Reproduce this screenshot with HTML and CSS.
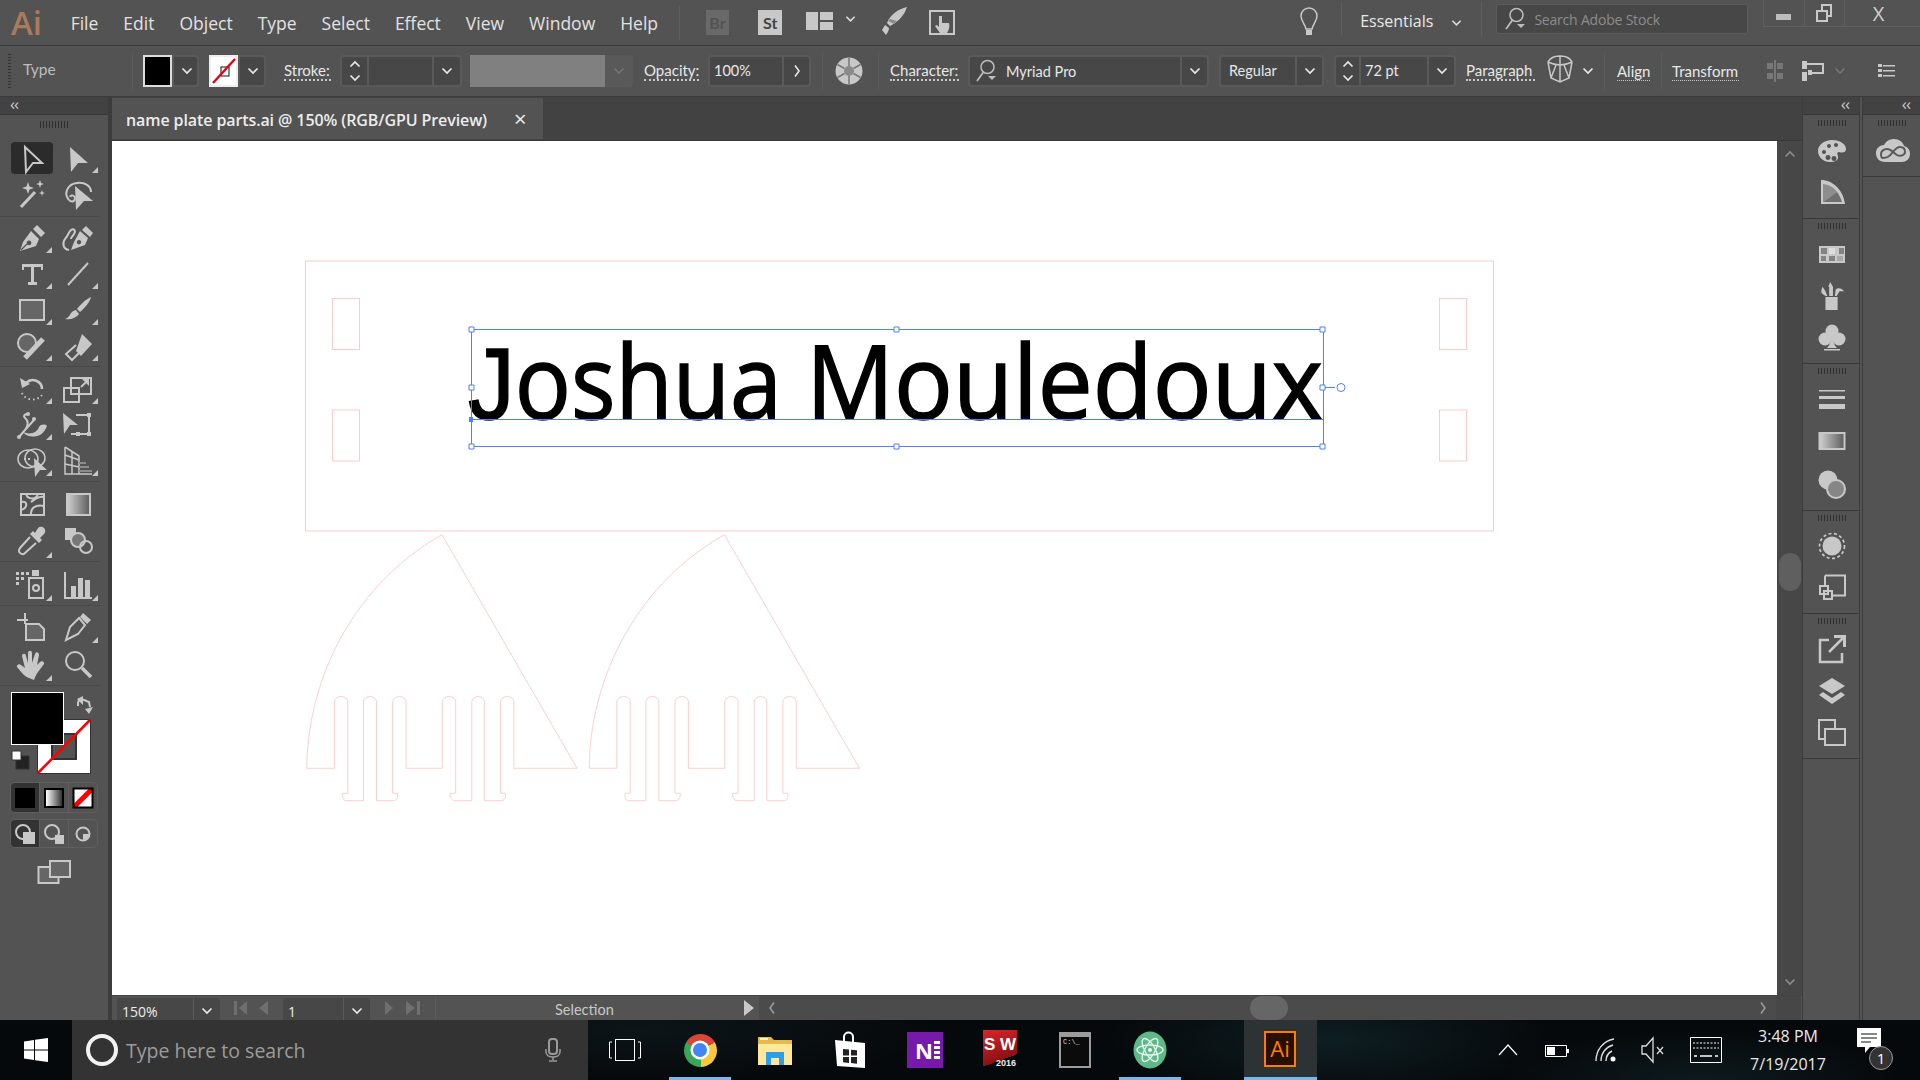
FILE: index.html
```html
<!DOCTYPE html>
<html lang="en">
<head>
<meta charset="utf-8">
<title>name plate parts.ai</title>
<link rel="stylesheet" href="styles.css">
</head>
<body>
<svg class="sprite" aria-hidden="true">
  <defs>
    <linearGradient id="gr"><stop offset="0" stop-color="#e8e8e8"/><stop offset="1" stop-color="#555"/></linearGradient>
    <linearGradient id="gr2"><stop offset="0" stop-color="#fff"/><stop offset="1" stop-color="#333"/></linearGradient>
    <linearGradient id="gr3"><stop offset="0" stop-color="#d0d0d0"/><stop offset="1" stop-color="#5c5c5c"/></linearGradient>
  </defs>
  <symbol id="cd" viewBox="0 0 12 8"><path d="M1.500 1.500 6 6l4.500-4.500" fill="none" stroke="currentColor" stroke-width="1.700"/></symbol>
  <symbol id="cu" viewBox="0 0 12 8"><path d="M1.500 6.500 6 2l4.500 4.500" fill="none" stroke="currentColor" stroke-width="1.700"/></symbol>
  <symbol id="cr" viewBox="0 0 8 14"><path d="M2 1.500 6 7l-4 5.500" fill="none" stroke="currentColor" stroke-width="1.600"/></symbol>
  <symbol id="cl" viewBox="0 0 8 14"><path d="M6 1.500 2 7l4 5.500" fill="none" stroke="currentColor" stroke-width="1.600"/></symbol>
  <symbol id="sr" viewBox="0 0 24 24"><circle cx="13.500" cy="8" r="6.500" fill="none" stroke="currentColor" stroke-width="1.500"/><path d="M9.500 13 3 22" fill="none" stroke="currentColor" stroke-width="1.800"/><path d="M14 17h8l-4 4z" fill="currentColor"/></symbol>
</svg>

<header class="menubar">
  <span class="logo">Ai</span>
  <nav class="menu">
    <span>File</span><span>Edit</span><span>Object</span><span>Type</span><span>Select</span><span>Effect</span><span>View</span><span>Window</span><span>Help</span>
  </nav>
  <span class="vsep vsep-menu"></span>
  <span class="app-br">Br</span>
  <span class="app-st">St</span>
  <svg class="ic-layout" width="27" height="18" viewBox="0 0 27 18"><path class="f" d="M0 0h12v18H0zM14 0h13v8H14zM14 10h13v8H14z"/></svg>
  <svg class="ch-layout"><use href="#cd"/></svg>
  <svg class="ic-feather" width="28" height="30" viewBox="0 0 28 30"><path class="f" d="M26 1C17 3 9 9 6 17l3 3C15 17 23 11 26 1ZM4 19l-3 5 4 5c2-3 3-5 3-7Z"/><path class="g" d="M9 13 7 15l6 3 3-3Z"/></svg>
  <svg class="ic-down" width="26" height="26" viewBox="0 0 26 26"><path class="s" d="M1 2h24v23H1z"/><path class="f" d="M10 7h3v7h7c1 3 0 7-2 10H11l-5-7 2-1 2 2Z"/></svg>
  <svg class="ic-bulb" width="20" height="30" viewBox="0 0 20 30"><path class="s s15" d="M10 2a8 8 0 0 1 8 8c0 5-4 8-5 13H7C6 18 2 15 2 10a8 8 0 0 1 8-8Z"/><path class="f" d="M7 24h6v5H7z"/></svg>
  <span class="vsep vsep-bulb"></span>
  <span class="essentials">Essentials</span>
  <svg class="ch-ess"><use href="#cd"/></svg>
  <span class="vsep vsep-ess"></span>
  <div class="stock"><svg class="sr"><use href="#sr"/></svg><span>Search Adobe Stock</span></div>
  <div class="winctl">
    <span class="wc wc-min"><i></i></span>
    <span class="wc wc-res"><svg width="18" height="20" viewBox="0 0 18 20"><path class="f" d="M6 1h11v13h-4v5H1V7h5Zm2 2v4h5v5h2V3ZM3 9v8h8V9Z"/></svg></span>
    <span class="wc wc-x">X</span>
  </div>
</header>

<section class="controlbar">
  <span class="cgrip"></span>
  <span class="c-type">Type</span>
  <div class="field c-fill"><span class="swatch swatch-k"></span><span class="fch"><svg class="ch"><use href="#cd"/></svg></span></div>
  <div class="field c-stroke"><span class="swatch swatch-none"><svg width="28" height="28" viewBox="0 0 28 28"><rect class="dk" x="10" y="10" width="8" height="9"/><path d="M2 26 24 2" stroke="#e60012" stroke-width="2.400"/></svg></span><span class="fch"><svg class="ch"><use href="#cd"/></svg></span></div>
  <span class="lbl c-strokel">Stroke:</span>
  <div class="field c-weight"><span class="step"><svg class="chu"><use href="#cu"/></svg><svg class="chu"><use href="#cd"/></svg></span><span class="grow"></span><span class="fch wide"><svg class="ch"><use href="#cd"/></svg></span></div>
  <div class="c-opgray"><span class="graybar"></span><svg class="ch dim"><use href="#cd"/></svg></div>
  <span class="lbl c-opl">Opacity:</span>
  <div class="field c-op"><span class="val grow">100%</span><span class="fch"><svg class="chr"><use href="#cr"/></svg></span></div>
  <span class="vline c-d1"></span>
  <svg class="c-globe" width="32" height="32" viewBox="0 0 32 32"><circle cx="16" cy="16" r="13.500" class="f"/><circle cx="16" cy="16" r="5" fill="#8a8a8a"/><path d="M16 3v8M16 21v8M4.500 9.500l7 4M20.500 18.500l7 4M27.500 9.500l-7 4M11.500 18.500l-7 4" stroke="#777" stroke-width="1.500"/></svg>
  <span class="vline c-d2"></span>
  <span class="lbl c-charl">Character:</span>
  <div class="field c-font"><svg class="sr"><use href="#sr"/></svg><span class="val grow">Myriad Pro</span><span class="fch wide2"><svg class="ch"><use href="#cd"/></svg></span></div>
  <div class="field c-style"><span class="val grow">Regular</span><span class="fch"><svg class="ch"><use href="#cd"/></svg></span></div>
  <div class="field c-size"><span class="step narrow"><svg class="chu"><use href="#cu"/></svg><svg class="chu"><use href="#cd"/></svg></span><span class="val grow">72 pt</span><span class="fch"><svg class="ch"><use href="#cd"/></svg></span></div>
  <span class="lbl c-para">Paragraph</span>
  <svg class="c-warp" width="28" height="30" viewBox="0 0 28 30"><path class="s s15" d="M14 2C8 2 4 4 2 8l3 16 9 4 9-4 3-16c-2-4-6-6-12-6ZM14 2v26M2 8c4 2 8 3 12 3s8-1 12-3M5 24l5-13M23 24l-5-13"/></svg>
  <svg class="c-warpch"><use href="#cd"/></svg>
  <span class="vline c-d3"></span>
  <span class="lbl thin c-align">Align</span>
  <span class="vline c-d4"></span>
  <span class="lbl thin c-trans">Transform</span>
  <svg class="c-ai1" width="20" height="22" viewBox="0 0 20 22"><path class="g2" d="M2 3h6v6H2zM12 3h6v6h-6zM2 13h6v6H2zM12 13h6v6h-6zM9 0h2v22H9z"/></svg>
  <svg class="c-ai2" width="23" height="20" viewBox="0 0 23 20"><path class="f" d="M0 0h5v8H0zM0 11h5v9H0z"/><path class="s" d="M5 3h16v9H8"/><path class="f" d="M6 9h4v5H6z"/></svg>
  <svg class="c-aich dim"><use href="#cd"/></svg>
  <svg class="c-list" width="17" height="14" viewBox="0 0 17 14"><path class="f" d="M0 0h4v3H0zM0 5h4v3H0zM0 10h4v3H0zM5 1h12v1.500H5zM5 6h12v1.500H5zM5 11h12v1.500H5z"/></svg>
</section>

<main class="workspace">
  <aside class="tools">
    <div class="dockhead"><span class="dbl">‹‹</span></div>
    <div class="griprow"><span class="grip"></span></div>

    <div class="tgroup g1">
      <div class="tool sel"><svg viewBox="0 0 32 32"><path class="s" d="M9 6 26 22H17l-7 9Z"/></svg></div>
      <div class="tool fly"><svg viewBox="0 0 32 32"><path class="f" d="M8 6 26 22H16l-7 9Z"/></svg></div>
      <div class="tool"><svg viewBox="0 0 32 32"><path class="f" d="M12 3l1.500 4.500L18 9l-4.500 1.500L12 15l-1.500-4.500L6 9l4.500-1.500ZM24 1l1 3 3 1-3 1-1 3-1-3-3-1 3-1ZM26 11l.8 2.200 2.200.8-2.200.8L26 17l-.8-2.200L23 14l2.200-.8Z"/><path class="s w3" d="M5 28 19 13"/></svg></div>
      <div class="tool"><svg viewBox="0 0 32 32"><path class="s" d="M7 21C1 14 6 5 15 4c8-1 14 3 14 9"/><path class="s" d="M7 21c3 3 6 1 6-2 0-2-4-4-5-1"/><path class="f" d="M13 7 31 22H22l-8 9Z"/></svg></div>
    </div>

    <div class="tgroup g2">
      <div class="tool fly"><svg viewBox="0 0 32 32"><path class="f" d="M21 3l8 8-4 4-8-8Z"/><path class="f ev" d="M15 9l8 8-3 7-16 5 3-9ZM13 18.500a2.400 2.400 0 1 0 .01 0Z"/><path d="M5 28l6-6" stroke="#535353" stroke-width="1.200"/></svg></div>
      <div class="tool"><svg viewBox="0 0 32 32"><path class="f" d="M24 4l7 7-3 4-8-7Z"/><path class="f ev" d="M18 9l8 7-3 7-14 5 3-8ZM17 18a2.200 2.200 0 1 0 .01 0Z"/><path class="s" d="M7 28C1 27 0 21 3 17c3-3 3-6 6-9 3-2 5 1 3 4-1 2-3 3-3 5"/></svg></div>
      <div class="tool fly"><svg viewBox="0 0 32 32"><path class="f" d="M6 6h21v6h-2V9h-7v15h3v3h-9v-3h3V9H8v3H6Z"/></svg></div>
      <div class="tool fly"><svg viewBox="0 0 32 32"><path class="s" d="M6 27 26 5"/></svg></div>
      <div class="tool fly"><svg viewBox="0 0 32 32"><rect class="sm" x="4" y="6" width="24" height="20"/></svg></div>
      <div class="tool fly"><svg viewBox="0 0 32 32"><path class="f" d="M29 3c-1 5-7 12-11 15l-3-3c3-4 9-10 14-12ZM14 16l3 4c-3 4-8 6-14 5 4-1 5-5 7-7 1-1 3-2 4-2Z"/></svg></div>
      <div class="tool fly"><svg viewBox="0 0 32 32"><circle class="sm" cx="11" cy="13" r="9"/><path class="s w5" d="M9 28 27 9"/></svg></div>
      <div class="tool fly"><svg viewBox="0 0 32 32"><path class="f" d="M20 4l10 10-11 12-5-5Z"/><path class="s" d="M14 15l-10 9 6 6 9-9"/></svg></div>
    </div>

    <div class="tgroup g3">
      <div class="tool fly"><svg viewBox="0 0 32 32"><path class="s w25" d="M10 10c6-6 16-2 16 6"/><path class="f" d="M4 5l2 10 8-4Z"/><path class="s dots" d="M6 20c2 6 14 10 20 2"/></svg></div>
      <div class="tool fly"><svg viewBox="0 0 32 32"><path class="s" d="M9 5h20v16H9zM2 15h15v14H2z"/><path class="s" d="M19 14l6-6"/><path class="f" d="M20 6h7v7Z"/></svg></div>
      <div class="tool fly"><svg viewBox="0 0 32 32"><path class="f" d="M7 23c7 3 14 1 16-5 2-3 6-3 8-1-2 5-5 9-10 10-5 1-10 1-14-4Z"/><path class="s" d="M3 28 9 21C13 16 12 11 9 9c-2-2 0-5 3-3M9 21l9-10"/><circle class="f" cx="12" cy="5" r="2"/><circle class="f" cx="18" cy="10" r="2"/><circle class="f" cx="3" cy="28" r="2"/></svg></div>
      <div class="tool"><svg viewBox="0 0 32 32"><path class="f" d="M1 4 16 16H8l-6 9Z"/><path class="s" d="M14 6h13v19H9"/><path class="f" d="M25 4h4v4h-4zM25 23h4v4h-4zM14 23h4v4h-4z"/></svg></div>
      <div class="tool fly"><svg viewBox="0 0 32 32"><ellipse class="s s15" cx="12" cy="14" rx="10" ry="9"/><ellipse class="s s15" cx="19" cy="13" rx="10" ry="9"/><path class="f" d="M18 13l13 12h-7l-5 7Z"/><path class="f" d="M8 13h2v2H8zM12 13h2v2h-2z"/></svg></div>
      <div class="tool fly"><svg viewBox="0 0 32 32"><path class="s s15" d="M3 2v27h27M3 2l14 9v18M3 10l14 5M3 19l14 3M10 6v23"/><path class="g" d="M17 17h7v2h-7zM17 21h10v2H17zM17 25h13v2H17z"/></svg></div>
    </div>

    <div class="tgroup g4">
      <div class="tool"><svg viewBox="0 0 32 32"><rect class="s" x="5" y="6" width="23" height="21"/><path class="s" d="M5 14c7-2 7 6 0 8M15 27c-1-7 5-11 13-9M10 6c2 6 10 6 12 0M15 14c3-2 7-6 13-5"/></svg></div>
      <div class="tool"><svg viewBox="0 0 32 32"><rect x="5" y="6" width="23" height="21" fill="url(#gr3)" stroke="#c8c8c8" stroke-width="2"/></svg></div>
      <div class="tool fly"><svg viewBox="0 0 32 32"><path class="f" d="M22 2a4 4 0 0 1 6 6l-4 4 2 2-3 3-9-9 3-3 2 2Z"/><path class="s" d="M14 11 4 22c-3 4 2 8 5 5l11-10"/></svg></div>
      <div class="tool"><svg viewBox="0 0 32 32"><path class="f" d="M3 2h11v12H3z"/><circle cx="16" cy="14" r="7" fill="#777" stroke="#c8c8c8" stroke-width="2"/><circle class="s" cx="24" cy="21" r="6"/></svg></div>
    </div>

    <div class="tgroup g5">
      <div class="tool fly"><svg viewBox="0 0 32 32"><path class="f" d="M0 3h3v3H0zM5 3h3v3H5zM10 3h3v3h-3zM0 8h3v3H0zM5 8h3v3H5zM0 13h3v3H0z"/><path class="f" d="M16 1h7v6h-7z"/><rect class="s" x="13" y="9" width="14" height="20"/><circle class="s" cx="20" cy="19" r="3"/></svg></div>
      <div class="tool fly"><svg viewBox="0 0 32 32"><path class="s" d="M3 3v26h27"/><path class="f" d="M9 17h5v11H9zM16 9h5v19h-5zM23 11h5v17h-5z"/></svg></div>
    </div>

    <div class="tgroup g6">
      <div class="tool"><svg viewBox="0 0 32 32"><path class="s" d="M1 9h11M9 2v11"/><path class="sm" d="M10 13h13l5 5v11H10Z"/></svg></div>
      <div class="tool fly"><svg viewBox="0 0 32 32"><path class="f" d="M21 2l8 7-4 4-7-7Z"/><path class="s" d="M17 7l6 7-7 9-12 6 4-13Z"/></svg></div>
      <div class="tool fly"><svg viewBox="0 0 32 32"><path class="f" d="M13 29C8 27 6 24 1 18c-1-2 2-4 4-2l4 3L6 7c0-3 4-3 4 0l2 7V4c0-3 4-3 4 0v10l3-9c1-3 4-2 4 1l-2 10 3-3c2-2 5 0 4 2l-6 8c-2 3-3 5-4 8Z"/></svg></div>
      <div class="tool"><svg viewBox="0 0 32 32"><circle class="s" cx="13" cy="12" r="9"/><path class="s w35" d="M20 19l9 9"/></svg></div>
    </div>

    <svg class="fillstroke" width="108" height="96" viewBox="0 0 108 96">
      <path fill="#fff" stroke="#333" d="M37.500 33.500h53v54h-53z"/>
      <path fill="#535353" stroke="#333" stroke-width="2" d="M52 48h24v25H52z"/>
      <path d="M38 87 90 34" stroke="#f00" stroke-width="2.500"/>
      <rect x="11.500" y="6.500" width="52" height="52" fill="#000" stroke="#fff"/>
      <path class="s" d="M78 20v-3c0-3 3-4 6-3l5 2 1 5"/>
      <path class="f" d="M77 13l6-3v9ZM85 23l8-2-4 7Z"/>
      <path fill="#222" stroke="#333" d="M16 70h13v13H16z"/>
      <path fill="#fff" stroke="#333" d="M12 65h9v9h-9z"/>
    </svg>

    <div class="seg mode-row">
      <span class="on"><i class="m-k"></i></span>
      <span><i class="m-g"></i></span>
      <span><svg width="20" height="20" viewBox="0 0 20 20"><path fill="#fff" d="M0 0h20v20H0z"/><path d="M1 19 19 1" stroke="#f00" stroke-width="5"/><path d="M.5.500h19v19H.500z" fill="none" stroke="#000" stroke-width="2"/></svg></span>
    </div>
    <div class="seg draw-row">
      <span class="on"><svg width="22" height="22" viewBox="0 0 22 22"><circle class="s" cx="9" cy="9" r="7"/><path class="f" d="M9 9h12v12H9z"/></svg></span>
      <span><svg width="22" height="22" viewBox="0 0 22 22"><circle class="s" cx="9" cy="9" r="7"/><path class="f" d="M12 12h9v9h-9z"/></svg></span>
      <span><svg width="16" height="16" viewBox="0 0 16 16"><circle class="s" cx="8" cy="8" r="6.500"/><path class="f" d="M8 8h6a6 6 0 0 1-6 6Z"/></svg></span>
    </div>
    <div class="screen"><svg width="34" height="26" viewBox="0 0 34 26"><rect class="sm" x="1.500" y="8" width="20" height="16"/><rect class="sm" x="13" y="2" width="20" height="16"/></svg></div>
  </aside>

  <div class="center">
    <div class="tabs">
      <div class="tab"><span>name plate parts.ai @ 150% (RGB/GPU Preview)</span><b>×</b></div>
    </div>
    <div class="stage">
      <svg class="art" viewBox="112 141 1665 854">
        <defs>
          <path id="part" d="M441.900 534.700 577 768.300H513.900V702a6.700 5.500 0 0 0-13.400 0V793.300H505.500c0 4 0 7.400-5 7.400H484.400V702a6.300 5.500 0 0 0-12.600 0V800.700H454.600c-3 0-4.600-4-4.600-7.400H455.700V702a6.700 5.500 0 0 0-13.400 0V768.300H406V702a6.700 5.500 0 0 0-13.400 0V793.300H397.900c0 4-1 7.400-5 7.400H376.500V702a6.500 5.500 0 0 0-13 0V800.700H345.500c-2 0-3-4-3-7.400H347.800V702a6.700 5.500 0 0 0-13.400 0V768.300H306.800C307 690 345 590 441.900 534.700Z"/>
        </defs>
        <rect class="a1" x="305.500" y="261" width="1188" height="270"/>
        <rect class="a1" x="332.500" y="298.500" width="27" height="51"/>
        <rect class="a1" x="332.500" y="410" width="27" height="51"/>
        <rect class="a1" x="1439.500" y="298.500" width="27" height="51"/>
        <rect class="a1" x="1439.500" y="410" width="27" height="51"/>
        <use href="#part" class="a2"/>
        <use href="#part" class="a2" x="282.400"/>
        <text class="name" x="468" y="419" textLength="314" lengthAdjust="spacingAndGlyphs"><tspan class="name-j">J</tspan>oshua</text>
        <text class="name" x="806" y="419" textLength="517" lengthAdjust="spacingAndGlyphs">Mouledoux</text>
        <path class="sl" d="M471.500 329.500h852v117h-852zM471 419.500h852M1323 387.500h12"/>
        <circle class="sl" cx="1341" cy="387.500" r="4"/>
        <path class="h" d="M469 327h5v5h-5zM894 327h5v5h-5zM1320 327h5v5h-5zM469 385h5v5h-5zM1320 385h5v5h-5zM469 444h5v5h-5zM894 444h5v5h-5zM1320 444h5v5h-5z"/>
        <path d="M469 417h4v5h-4z" fill="#4f7fff"/>
      </svg>
      <div class="vscroll">
        <svg class="vs-up"><use href="#cu"/></svg>
        <span class="vs-thumb"></span>
        <svg class="vs-down"><use href="#cd"/></svg>
      </div>
    </div>
    <div class="status">
      <div class="st-left">
        <div class="sfield sf-zoom"><span class="sval">150%</span><span class="sch"><svg class="ch"><use href="#cd"/></svg></span></div>
        <svg class="nav" width="46" height="16" viewBox="0 0 46 16"><path class="nv" d="M0 1h3v14H0zM13 1v14L5 8ZM34 1v14l-9-7Z"/></svg>
        <div class="sfield sf-page"><span class="sval">1</span><span class="sch"><svg class="ch"><use href="#cd"/></svg></span></div>
        <svg class="nav nav2" width="44" height="16" viewBox="0 0 44 16"><path class="nv" d="M0 1v14l8-7ZM21 1v14l9-7ZM32 1h3v14h-3z"/></svg>
        <span class="st-div"></span>
        <span class="st-label">Selection</span>
        <svg class="st-play" width="10" height="16" viewBox="0 0 10 16"><path class="f" d="M0 0v16l10-8Z"/></svg>
      </div>
      <div class="hscroll">
        <svg class="hs-l"><use href="#cl"/></svg>
        <span class="hs-thumb"></span>
        <svg class="hs-r"><use href="#cr"/></svg>
      </div>
      <div class="corner"></div>
    </div>
  </div>

  <aside class="dock">
    <div class="dockcol">
      <div class="dockhead right"><span class="dbl">‹‹</span></div>
      <div class="pgroup first">
        <span class="grip"></span>
        <div class="pi"><svg viewBox="0 0 30 26"><path class="f ev" d="M15 2c8 0 14 4 14 9 0 4-4 4-7 3-2 0-2 2-1 4 1 4-3 6-8 6C6 24 1 19 1 13 1 7 7 2 15 2ZM7 12a2 2 0 1 0 .01 0ZM11 17a2.500 2.500 0 1 0 .01 0ZM17 18a2.500 2.500 0 1 0 .01 0ZM12 6a2 2 0 1 0 .01 0ZM19 5a2 2 0 1 0 .01 0Z"/></svg></div>
        <div class="pi"><svg viewBox="0 0 30 26"><path class="f" d="M4 0c12 0 22 10 24 24H4Z"/><path fill="#8d8d8d" d="M6 22 6 4c8 1 12 5 14 8Z"/><path fill="#6f6f6f" d="M6 22l14-10c2 3 4 6 5 10Z"/></svg></div>
      </div>
      <div class="pgroup">
        <span class="grip"></span>
        <div class="pi"><svg viewBox="0 0 30 26"><path class="f" d="M2 5h26v17H2z"/><path fill="#838383" d="M4 7h6v6H4zM22 7h5v6h-5zM4 15h5v5H4zM12 15h6v5h-6z"/><path fill="#ddd" d="M12 7h6v6h-6z"/><path fill="#a8a8a8" d="M20 15h6v5h-6z"/></svg></div>
        <div class="pi"><svg viewBox="0 0 30 32"><path class="f" d="M8 17h13v14H8zM12 16V6h-1l2-5 3 5v10h-1zM8 16 4 13c-1-2 0-5 1-7l3 5 2 5ZM18 16l1-7c2-2 6-2 9 2h-5l-3 5Z"/></svg></div>
        <div class="pi"><svg viewBox="0 0 30 30"><circle class="f" cx="15" cy="8" r="6.500"/><circle class="f" cx="8" cy="16" r="6.500"/><circle class="f" cx="22" cy="16" r="6.500"/><path class="f" d="M14 12h2c0 6 1 10 4 13H10c3-3 4-7 4-13ZM7 26h16v1.500H7z"/></svg></div>
      </div>
      <div class="pgroup">
        <span class="grip"></span>
        <div class="pi"><svg viewBox="0 0 30 26"><path class="f" d="M2 4h26v1.500H2zM2 10h26v3H2zM2 18h26v5H2z"/></svg></div>
        <div class="pi"><svg viewBox="0 0 30 26"><rect x="2.500" y="5" width="25" height="16" fill="url(#gr3)" stroke="#c8c8c8" stroke-width="2"/></svg></div>
        <div class="pi pi-low"><svg viewBox="0 0 30 30"><circle class="f" cx="11" cy="10" r="9.500"/><circle cx="19" cy="19" r="9" fill="#868686" stroke="#c8c8c8" stroke-width="2"/></svg></div>
      </div>
      <div class="pgroup">
        <span class="grip"></span>
        <div class="pi"><svg viewBox="0 0 30 30"><circle class="f" cx="15" cy="15" r="9.500"/><circle class="s dash" cx="15" cy="15" r="12.500"/></svg></div>
        <div class="pi"><svg viewBox="0 0 30 28"><path class="s" d="M8 1.500h20v20H15M8 1.500v11"/><path class="s" d="M3 12h8v8H3zM7 17h8v8H7z"/></svg></div>
      </div>
      <div class="pgroup">
        <span class="grip"></span>
        <div class="pi"><svg viewBox="0 0 30 30"><path class="s w25" d="M12 6H3v22h22v-9"/><path class="s w25" d="M12 18 26 4"/><path class="f" d="M17 1h12v12h-3V4h-9Z"/></svg></div>
        <div class="pi"><svg viewBox="0 0 30 30"><path class="f" d="M15 2l13 8-13 8L2 10ZM2 19l4-3 9 6 9-6 4 3-13 9Z"/></svg></div>
        <div class="pi"><svg viewBox="0 0 30 30"><path class="s" d="M2 2h16v19H2z"/><rect x="8" y="11" width="20" height="16" fill="#535353" stroke="#c8c8c8" stroke-width="2"/></svg></div>
      </div>
    </div>
    <div class="dockcol cc">
      <div class="dockhead right"><span class="dbl">‹‹</span></div>
      <div class="pgroup first cc-g">
        <span class="grip"></span>
        <div class="pi"><svg viewBox="0 0 34 26"><path class="f" d="M9 24C3 24 0 20 0 15c0-5 4-8 8-8 2-4 6-6 10-6 5 0 9 3 10 7 4 1 6 4 6 8 0 5-4 8-8 8Z"/><path d="M5 16c0-3 3-5 6-5 4 0 7 4 10 6 3 2 8 0 8-3s-2-5-5-5c-4 0-6 4-8 6-2 3-5 5-9 5-1 0-2 0-2-4Z" fill="none" stroke="#5a5a5a" stroke-width="2"/></svg></div>
      </div>
    </div>
  </aside>
</main>

<footer class="taskbar">
  <div class="tb-start"><svg width="24" height="24" viewBox="0 0 24 24"><path fill="#fff" d="M0 3.400 10 2v9.500H0ZM11 1.800 24 0v11.500H11ZM0 12.500h10V22L0 20.600ZM11 12.500h13V24l-13-1.800Z"/></svg></div>
  <div class="tb-search">
    <span class="cortana"></span>
    <span class="tb-hint">Type here to search</span>
    <svg class="mic" width="16" height="24" viewBox="0 0 16 24"><rect x="4" y="1" width="8" height="15" rx="3" fill="none" stroke="#9a9a9a" stroke-width="2"/><path d="M1 11v3c0 3 3 5 7 5s7-2 7-5v-3M8 19v3M4 23h8" fill="none" stroke="#9a9a9a" stroke-width="1.500"/></svg>
  </div>
  <div class="tb-taskview"><svg width="32" height="22" viewBox="0 0 32 22"><rect x="6.500" y=".500" width="19" height="21" fill="none" stroke="#fff"/><path d="M3 3H.500v16H3M29 3h2.500v16H29" fill="none" stroke="#fff"/></svg></div>
  <div class="tb-app run"><span class="chrome"></span></div>
  <div class="tb-app"><svg width="34" height="30" viewBox="0 0 34 30"><path fill="#e5b94c" d="M0 2h13l3 3h18v25H0Z"/><path fill="#ffe79b" d="M0 9h34v21H0Z"/><path fill="#2f9ee8" d="M8 17h18v13h-5v-7h-8v7H8Z"/><path fill="#fff3c9" d="M2 3h8v2H2Z"/></svg></div>
  <div class="tb-app"><svg width="32" height="38" viewBox="0 0 32 38"><path fill="none" stroke="#fff" stroke-width="2" d="M10 11V6c0-6 9-6 9 0v5"/><path fill="#fff" d="M1 9l30 3v25L3 35Z"/><path fill="#222" d="M9 18l6 .5v6H9ZM17 18.700l6 .5v5.300h-6ZM9 26h6v6l-6-.7ZM17 26h6v6.800l-6-.7Z"/></svg></div>
  <div class="tb-app"><span class="onenote">N<i></i></span></div>
  <div class="tb-app"><span class="sw"><b>S W</b><em>2016</em></span></div>
  <div class="tb-app"><span class="cmd">C:\_</span></div>
  <div class="tb-app run"><svg width="34" height="38" viewBox="0 0 34 38"><ellipse cx="17" cy="19" rx="16.500" ry="18.500" fill="#5db98a"/><g fill="none" stroke="#e8f7ee" stroke-width="1.400"><ellipse cx="17" cy="19" rx="13" ry="5"/><ellipse cx="17" cy="19" rx="13" ry="5" transform="rotate(60 17 19)"/><ellipse cx="17" cy="19" rx="13" ry="5" transform="rotate(120 17 19)"/></g><circle cx="17" cy="19" r="2" fill="#e8f7ee"/></svg></div>
  <div class="tb-ai"><span class="ai-ico">Ai</span></div>
  <div class="tray">
    <span class="tr t1"><svg width="20" height="12" viewBox="0 0 20 12"><path d="M1 11 10 1l9 10" fill="none" stroke="#fff" stroke-width="1.200"/></svg></span>
    <span class="tr t2"><svg width="24" height="14" viewBox="0 0 24 14"><path d="M.500 2.500h21v11H.500z" fill="none" stroke="#fff"/><path d="M2 4h8v8H2zM22 6h2v4h-2z" fill="#fff"/></svg></span>
    <span class="tr t3"><svg width="22" height="24" viewBox="0 0 22 24"><path d="M2 23C2 12 9 3 20 1M7 23C7 15 12 9 19 7M12 23c0-4 2-8 6-10" fill="none" stroke="#ddd" stroke-width="1.400"/><circle cx="19" cy="21" r="2.500" fill="#fff"/></svg></span>
    <span class="tr t4"><svg width="24" height="26" viewBox="0 0 24 26"><path d="M1 9h4l7-8v24l-7-8H1Z" fill="none" stroke="#ddd" stroke-width="1.300"/><path d="M16 10l6 7M22 10l-6 7" stroke="#ddd" stroke-width="1.200"/></svg></span>
    <span class="tr t5"><svg width="32" height="26" viewBox="0 0 32 26"><path d="M.500.500h31v25H.500z" fill="none" stroke="#fff"/><path d="M3 6h26M3 11h26" stroke="#fff" stroke-dasharray="2 1.500"/><path d="M4 19h3M10 19h12M25 19h3" stroke="#fff" stroke-width="1.300"/></svg></span>
    <div class="clock"><span>3:48 PM</span><span>7/19/2017</span></div>
    <span class="notif"><svg width="24" height="28" viewBox="0 0 24 28"><path fill="#fff" d="M0 0h24v19H13l-5 6v-6H0Z"/><path stroke="#111" d="M4 6h16M4 10h16M4 14h10"/></svg><b>1</b></span>
  </div>
</footer>
</body>
</html>
```

FILE: styles.css
```css
* { box-sizing: border-box; }
html, body { margin: 0; padding: 0; }
body {
  width: 1920px; height: 1080px; overflow: hidden;
  display: flex; flex-direction: column;
  background: #535353; color: #e6e6e6;
  font-family: "Open Sans", "Noto Sans", sans-serif;
}
svg { display: block; flex: none; overflow: visible; }
.sprite { position: absolute; width: 0; height: 0; }

/* shared icon paints */
.f { fill: #c8c8c8; }
.g { fill: #8c8c8c; }
.g2 { fill: #777; }
.s { fill: none; stroke: #c8c8c8; stroke-width: 2; }
.s15 { stroke-width: 1.500; }
.w25 { stroke-width: 2.500; }
.w3 { stroke-width: 3; }
.w35 { stroke-width: 3.500; }
.w5 { stroke-width: 5; }
.sm { fill: #666; stroke: #c8c8c8; stroke-width: 2; }
.ev { fill-rule: evenodd; }
.dots { stroke-dasharray: 1.500 3; }
.dash { stroke-dasharray: 3 2.500; stroke-width: 1.700; }

/* menu bar */
.menubar {
  height: 46px; flex: none; display: flex; align-items: center;
  background: #535353; border-bottom: 1px solid #3b3b3b;
}
.logo { margin-left: 11px; width: 36px; font: 600 33px/45px "Open Sans", sans-serif; color: #a97a5c; }
.menu { display: flex; gap: 25px; margin-left: 24px; width: 586px; font-size: 17.500px; color: #e2e2e2; white-space: nowrap; }
.vsep { width: 1px; height: 34px; background: #5f5f5f; }
.vsep-menu { margin-left: 22px; }
.app-br, .app-st {
  width: 24px; height: 25px; text-align: center;
  font: 700 16px/25px "Lato", sans-serif;
}
.app-br { margin-left: 26px; background: #696969; color: #535353; }
.app-st { margin-left: 29px; background: #c8c8c8; color: #444; }
.ic-layout { margin-left: 24px; margin-top: -4px; }
.ch-layout { width: 11px; height: 8px; margin-left: 12px; margin-top: -8px; color: #ddd; }
.ic-feather { margin-left: 25px; margin-top: -4px; }
.ic-down { margin-left: 20px; margin-top: -2px; }
.ic-bulb { margin-left: 344px; margin-top: -4px; }
.vsep-bulb { margin-left: 22px; margin-top: -8px; }
.essentials { margin-left: 18px; width: 78px; margin-top: -4px; font-size: 16px; color: #e8e8e8; }
.ch-ess { width: 11px; height: 8px; margin-left: 14px; color: #ddd; }
.vsep-ess { margin-left: 19px; margin-top: -8px; }
.stock {
  margin-left: 14px; width: 254px; height: 30px; margin-top: -7px;
  display: flex; align-items: center; padding-left: 6px;
  background: #474747; border: 1px solid #5c5c5c; border-radius: 3px;
  font-size: 14px; color: #8c8c8c;
}
.sr { width: 24px; height: 24px; color: #bdbdbd; }
.stock span { margin-left: 7px; letter-spacing: -.2px; }
.winctl {
  margin-left: 15px; width: 157px; height: 27px; align-self: flex-start;
  display: flex; border-bottom: 1px solid #606060;
}
.wc { display: flex; align-items: center; justify-content: center; border-left: 1px solid #5f5f5f; }
.wc-min { width: 41px; padding-top: 8px; }
.wc-min i { width: 15px; height: 6px; background: #bdbdbd; }
.wc-res { width: 40px; }
.wc-x { width: 76px; padding-right: 8px; font-size: 20px; color: #d0d0d0; }

/* control bar */
.controlbar {
  height: 51px; flex: none; display: flex; align-items: center;
  background: #535353; border-bottom: 1px solid #3b3b3b;
  font: 15px "Lato", sans-serif; color: #e8e8e8;
}
.cgrip {
  margin-left: 8px; width: 3px; height: 34px;
  background: repeating-linear-gradient(#333 0 1px, transparent 1px 3px);
}
.c-type { margin-left: 12px; width: 110px; height: 36px; line-height: 32px; color: #bdbdbd; border-right: 1px solid #5c5c5c; font-size: 15.500px; }
.field {
  height: 32px; display: flex; align-items: stretch;
  background: #474747; border: 2px solid #5a5a5a; border-radius: 4px;
}
.fch {
  width: 27px; flex: none; display: flex; align-items: center; justify-content: center;
  border-left: 2px solid #5a5a5a;
}
.fch.wide { width: 28px; }
.ch { width: 12px; height: 8px; color: #e8e8e8; }
.dim { color: #747474; }
.chu { width: 12px; height: 8px; color: #e8e8e8; }
.chr { width: 8px; height: 14px; color: #e8e8e8; }
.swatch { width: 29px; flex: none; display: block; margin: -2px 0 -2px -2px; border: 2px solid #ddd; }
.swatch-k { background: #000; }
.swatch-none { background: #fff; border-color: #eee; }
.dk { fill: none; stroke: #111; stroke-width: 1; }
.c-fill { margin-left: 10px; width: 56px; }
.c-stroke { margin-left: 10px; width: 57px; }
.lbl { flex: none; border-bottom: 2px dotted #c8c8c8; line-height: 18px; }
.lbl.thin { border-bottom-width: 1px; }
.c-strokel { margin-left: 18px; width: 47px; }
.c-weight { margin-left: 9px; width: 122px; }
.step {
  width: 27px; flex: none; display: flex; flex-direction: column;
  align-items: center; justify-content: center; gap: 6px;
  border-right: 2px solid #5a5a5a;
}
.step.narrow { width: 25px; }
.grow { flex: 1; }
.c-opgray { margin-left: 8px; width: 163px; height: 32px; display: flex; align-items: center; background: #595959; border-radius: 3px; }
.graybar { width: 135px; height: 32px; background: #808080; }
.c-opgray .ch { margin-left: 8px; }
.c-opl { margin-left: 11px; width: 55px; }
.c-op { margin-left: 9px; width: 103px; }
.val { padding-left: 4px; line-height: 27px; font-size: 14.500px; color: #e8e8e8; }
.vline { width: 1px; height: 36px; flex: none; background: #5c5c5c; }
.c-d1 { margin-left: 11px; }
.c-globe { margin-left: 10px; }
.c-d2 { margin-left: 13px; }
.c-charl { margin-left: 11px; width: 69px; }
.c-font { margin-left: 9px; width: 241px; padding-left: 4px; align-items: center; }
.c-font .val { padding-left: 8px; }
.c-font .fch { align-self: stretch; }
.c-style { margin-left: 10px; width: 105px; }
.c-style .val { padding-left: 8px; }
.c-size { margin-left: 10px; width: 122px; }
.c-para { margin-left: 10px; width: 69px; }
.c-warp { margin-left: 11px; margin-top: -4px; }
.c-warpch { margin-left: 8px; width: 12px; height: 8px; color: #e8e8e8; }
.c-d3 { margin-left: 10px; }
.c-align { margin-left: 12px; width: 33px; }
.c-d4 { margin-left: 11px; }
.c-trans { margin-left: 10px; width: 67px; }
.c-ai1 { margin-left: 26px; }
.c-ai2 { margin-left: 17px; }
.c-aich { margin-left: 9px; width: 12px; height: 8px; }
.c-list { margin-left: 32px; }

/* workspace */
.workspace { flex: none; height: 923px; display: flex; }
.tools { width: 112px; flex: none; background: #535353; border-right: 4px solid #3c3c3c; position: relative; }
.dockhead {
  height: 18px; background: #424242; display: flex; align-items: center; padding-left: 10px;
  border-bottom: 1px solid #383838;
}
.dockhead.right { justify-content: flex-end; padding: 0 10px 0 0; height: 18px; }
.dbl { font-size: 17px; line-height: 14px; color: #c8c8c8; letter-spacing: -1px; margin-top: -3px; }
.griprow { height: 18px; display: flex; align-items: center; justify-content: center; }
.grip {
  display: block; width: 29px; height: 7px;
  background: repeating-linear-gradient(90deg, #2f2f2f 0 1px, transparent 1px 3px);
}
.tgroup {
  display: grid; grid-template-columns: 46px 46px; padding-left: 9px; margin-right: 8px;
  border-bottom: 1px solid #484848;
}
.g1 { grid-auto-rows: 38px; padding-top: 5px; padding-bottom: 2px; }
.g2 { grid-auto-rows: 36px; padding-top: 3px; padding-bottom: 2px; }
.g3 { grid-auto-rows: 36px; padding-top: 4px; padding-bottom: 2px; }
.g4 { grid-auto-rows: 38px; padding-top: 3px; }
.g5 { grid-auto-rows: 38px; padding-top: 4px; padding-bottom: 1px; }
.g6 { grid-auto-rows: 38px; padding-top: 2px; padding-bottom: 1px; }
.tool { position: relative; display: flex; align-items: center; justify-content: center; }
.tool svg { width: 32px; height: 32px; }
.tool.sel::before {
  content: ""; position: absolute; left: 2px; right: 2px; top: 4px; bottom: 2px;
  background: #2b2b2b; border-radius: 4px;
}
.tool.sel svg { position: relative; }
.fly::after {
  content: ""; position: absolute; right: 3px; bottom: 3px; width: 0; height: 0;
  border-style: solid; border-width: 0 0 6px 6px; border-color: transparent transparent #c8c8c8 transparent;
}
.fillstroke { height: 96px; }
.seg {
  margin: 0 0 0 10px; width: 88px; display: flex;
  border: 1px solid #5f5f5f; border-radius: 5px; overflow: hidden; background: #535353;
}
.seg span {
  flex: 1; display: flex; align-items: center; justify-content: center;
  border-left: 1px solid #5f5f5f;
}
.seg span.on { background: #333; border-left: 0; }
.mode-row { height: 31px; }
.draw-row { height: 29px; margin-top: 6px; }
.m-k { width: 20px; height: 20px; background: #000; }
.m-g { width: 20px; height: 20px; background: linear-gradient(90deg, #fff, #333); border: 2px solid #000; }
.screen { margin-top: 11px; display: flex; justify-content: center; }

.center { width: 1690px; flex: none; display: flex; flex-direction: column; }
.tabs { height: 44px; flex: none; background: #424242; border-bottom: 1px solid #383838; display: flex; align-items: flex-start; padding-top: 1px; }
.tab {
  width: 431px; height: 41px; display: flex; align-items: center; padding-left: 14px; padding-top: 2px;
  background: #535353; font-weight: 600; font-size: 16px; color: #ececec; letter-spacing: -.1px; white-space: nowrap;
}
.tab span { width: 388px; }
.tab b { font-size: 22px; font-weight: 400; margin-top: -4px; }
.stage { height: 854px; flex: none; display: flex; }
.art { width: 1665px; height: 854px; background: #fff; }
.a1 { fill: none; stroke: #ffcaca; stroke-width: 1; }
.a2 { fill: none; stroke: #ffc8c8; stroke-width: .9; }
.name { font: 400 102px "Open Sans", sans-serif; fill: #000; stroke: #000; stroke-width: 1.500px; }
.name-j { font-family: "Liberation Sans", sans-serif; }
.sl { fill: none; stroke: #4f7fff; stroke-width: 1; }
.h { fill: #fff; stroke: #4f7fff; stroke-width: 1; }

.vscroll {
  width: 25px; flex: none; background: #474747; position: relative;
  display: flex; flex-direction: column; align-items: center;
}
.vs-up { width: 12px; height: 8px; margin-top: 9px; color: #8c8c8c; }
.vs-thumb { width: 22px; height: 38px; margin-top: 395px; border-radius: 11px; background: #5f5f5f; }
.vs-down { width: 12px; height: 8px; margin-top: auto; margin-bottom: 9px; color: #8c8c8c; }

.status { flex: 1; display: flex; background: #535353; overflow: hidden; border-top: 1px solid #444; }
.st-left { width: 647px; flex: none; display: flex; align-items: center; padding-left: 5px; }
.sfield {
  height: 26px; margin-top: 6px; display: flex;
  background: #474747; border-top-left-radius: 3px; border-top-right-radius: 3px;
  font-size: 14px;
}
.sf-zoom { width: 103px; }
.sf-page { width: 87px; }
.sval { flex: 1; padding-left: 5px; line-height: 27px; color: #ececec; }
.sch { width: 27px; display: flex; align-items: center; justify-content: center; border-left: 1px solid #5a5a5a; }
.nav { margin-left: 14px; margin-right: 3px; }
.nav2 { margin-left: 15px; }
.nv { fill: #6f6f6f; }
.st-div { width: 1px; height: 24px; background: #5c5c5c; margin-left: 3px; }
.st-label { margin-left: 119px; width: 189px; margin-top: 3px; font: 14.500px "Lato", sans-serif; color: #c8c8c8; }
.st-play { margin-left: 0; }
.hscroll { width: 1017px; flex: none; background: #4b4b4b; display: flex; align-items: center; position: relative; }
.hs-l { width: 8px; height: 14px; margin-left: 9px; color: #999; }
.hs-thumb { width: 38px; height: 24px; margin-left: 474px; background: #666; border-radius: 12px; }
.hs-r { width: 8px; height: 14px; margin-left: 471px; color: #999; }
.corner { width: 25px; flex: none; background: #474747; }

.dock { flex: 1; display: flex; background: #535353; gap: 2px; }
.dockcol { width: 58px; flex: none; border-left: 1px solid #3c3c3c; border-right: 1px solid #3c3c3c; }
.dockcol.cc { flex: 1; border-right: 0; }
.pgroup {
  display: flex; flex-direction: column; align-items: center;
  padding-left: 2px; padding-bottom: 4px; border-bottom: 1px solid #383838;
}
.pgroup.first { margin-top: 1px; }
.pgroup .grip { height: 14px; background-clip: content-box; padding: 4px 0; flex: none; }
.pi { height: 42px; width: 100%; display: flex; align-items: center; justify-content: center; }
.pi svg { width: 30px; height: 30px; }
.pi-low { padding-top: 2px; height: 44px; }
.cc-g { padding-bottom: 0; height: 61px; }
.cc-g .pi svg { width: 34px; height: 30px; }

/* taskbar */
.taskbar {
  height: 60px; flex: none; display: flex; align-items: center; color: #fff;
  background:
    radial-gradient(ellipse 220px 60px at 1330px 20px, rgba(30,70,75,.35), transparent),
    radial-gradient(ellipse 200px 50px at 1700px 60px, rgba(30,65,70,.3), transparent),
    radial-gradient(ellipse 300px 50px at 640px 10px, rgba(30,55,60,.25), transparent),
    #06090c;
}
.tb-start { width: 72px; flex: none; display: flex; justify-content: center; }
.tb-search {
  width: 516px; height: 60px; flex: none; display: flex; align-items: center; background: #333;
}
.cortana { width: 32px; height: 32px; margin-left: 14px; border-radius: 50%; border: 4px solid #f2f2f2; }
.tb-hint { margin-left: 8px; width: 419px; font-size: 19.500px; color: #9c9c9c; }
.tb-taskview { width: 74.500px; flex: none; display: flex; justify-content: center; }
.tb-app {
  width: 62px; margin: 0 6.500px; height: 60px; flex: none; display: flex; align-items: center; justify-content: center;
  border-bottom: 3px solid transparent; padding-top: 3px;
}
.tb-app.run { border-bottom-color: #76b9ed; }
.chrome {
  width: 33px; height: 33px; border-radius: 50%; position: relative;
  background: conic-gradient(from -60deg, #db4437 0 120deg, #f8c93b 120deg 240deg, #3aa757 240deg 360deg);
}
.chrome::after {
  content: ""; position: absolute; left: 9.500px; top: 9.500px; width: 14px; height: 14px; border-radius: 50%;
  background: #4285f4; box-shadow: 0 0 0 2.500px #fff;
}
.onenote {
  width: 36px; height: 36px; background: #7719aa; color: #fff; position: relative;
  font: 700 22px/36px "Open Sans", sans-serif; padding-left: 8px;
}
.onenote i {
  position: absolute; right: 3px; top: 9px; width: 6px; height: 18px;
  background: repeating-linear-gradient(#fff 0 3px, transparent 3px 5px);
}
.sw {
  width: 34px; height: 40px; display: flex; flex-direction: column; align-items: center;
  background: linear-gradient(160deg, #d8262c, #8d1014 70%, transparent 70%);
  position: relative; color: #fff;
}
.sw b { font: 700 17px/26px "Liberation Sans", sans-serif; margin-top: 2px; white-space: nowrap; }
.sw em { font: 700 9px/10px "Liberation Sans", sans-serif; margin-left: 12px; color: #eee; }
.cmd {
  width: 32px; height: 36px; background: #0b0b0b; border: 2px solid #9c9c9c; border-top-width: 5px;
  font: 7px/10px "Liberation Mono", monospace; color: #ddd; padding-left: 2px;
}
.tb-ai {
  margin-left: 56px; width: 73px; height: 60px; flex: none; display: flex; align-items: center; justify-content: center;
  background: #2d3234; border-bottom: 3px solid #76b9ed;
}
.ai-ico {
  width: 32px; height: 36px; background: #261000; border: 2px solid #ff7c00; color: #ff7c00;
  text-align: center; font: 400 22px/30px "Open Sans", sans-serif;
}
.tray { margin-left: auto; width: 436px; display: flex; align-items: center; }
.tr { display: flex; justify-content: center; flex: none; }
.t1 { width: 48px; }
.t2 { width: 49px; }
.t3 { width: 47px; }
.t4 { width: 49px; }
.t5 { width: 58px; }
.clock { width: 106px; display: flex; flex-direction: column; align-items: center; gap: 6px; font-size: 16px; line-height: 22px; color: #e8e8e8; }
.notif { margin-left: 16px; width: 34px; height: 44px; position: relative; }
.notif b {
  position: absolute; left: 12px; top: 18px; width: 24px; height: 24px; border-radius: 50%;
  border: 1px solid #999; background: #333; text-align: center;
  font: 400 15px/22px "Open Sans", sans-serif; color: #fff;
}
```
